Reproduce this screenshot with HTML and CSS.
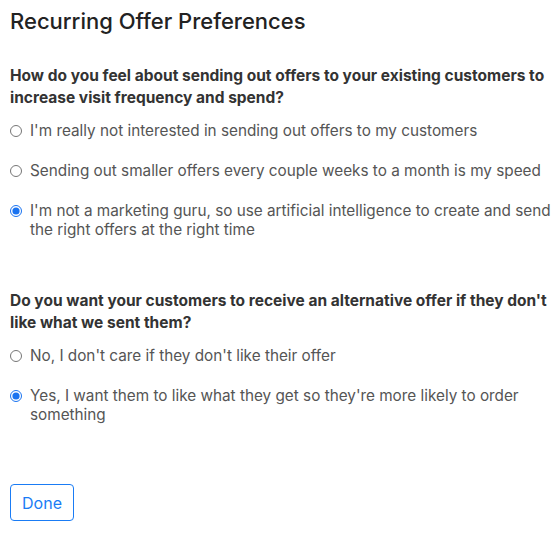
FILE: index.html
```html
<!DOCTYPE html>
<html lang="en">
<head>
<meta charset="utf-8">
<title>Recurring Offer Preferences</title>
<link rel="stylesheet" href="styles.css">
</head>
<body>
<main class="page">
  <h1 class="title">Recurring Offer Preferences</h1>

  <section class="question">
    <p class="prompt">How do you feel about sending out offers to your existing customers to increase visit frequency and spend?</p>
    <label class="option"><input type="radio" name="q1"><span>I'm really not interested in sending out offers to my customers</span></label>
    <label class="option"><input type="radio" name="q1"><span>Sending out smaller offers every couple weeks to a month is my speed</span></label>
    <label class="option"><input type="radio" name="q1" checked><span>I'm not a marketing guru, so use artificial intelligence to create and send the right offers at the right time</span></label>
  </section>

  <section class="question">
    <p class="prompt">Do you want your customers to receive an alternative offer if they don't like what we sent them?</p>
    <label class="option"><input type="radio" name="q2"><span>No, I don't care if they don't like their offer</span></label>
    <label class="option"><input type="radio" name="q2" checked><span>Yes, I want them to like what they get so they're more likely to order something</span></label>
  </section>

  <button class="done" type="button">Done</button>
</main>
</body>
</html>
```

FILE: styles.css
```css
html, body {
  margin: 0;
  padding: 0;
  background: #ffffff;
}

.page {
  font-family: Inter, "Noto Sans", sans-serif;
  padding: 6px 4px 10px 10px;
  display: flex;
  flex-direction: column;
  align-items: flex-start;
}

.title {
  margin: 0;
  font-size: 22px;
  font-weight: 500;
  line-height: 30px;
  color: #222;
}

.question {
  display: flex;
  flex-direction: column;
  margin-top: 29px;
  width: 100%;
}

.question + .question {
  margin-top: 30px;
}

.prompt {
  margin: 0 0 12px 0;
  font-size: 15.5px;
  font-weight: 700;
  line-height: 22px;
  color: #333;
}

.option {
  display: flex;
  align-items: flex-start;
  gap: 8px;
  font-size: 15.3px;
  line-height: 19px;
  color: #555;
  margin-bottom: 21px;
}

.option input {
  margin: 4px 0 0 0;
  width: 12px;
  height: 12px;
  flex: none;
  accent-color: #1a73f0;
}

.done {
  margin-top: 39px;
  font-family: inherit;
  font-size: 16px;
  color: #1a7cf5;
  background: #fff;
  border: 1px solid #1a7cf5;
  border-radius: 4px;
  padding: 0 10px;
  height: 37px;
  width: 64px;
}
```
